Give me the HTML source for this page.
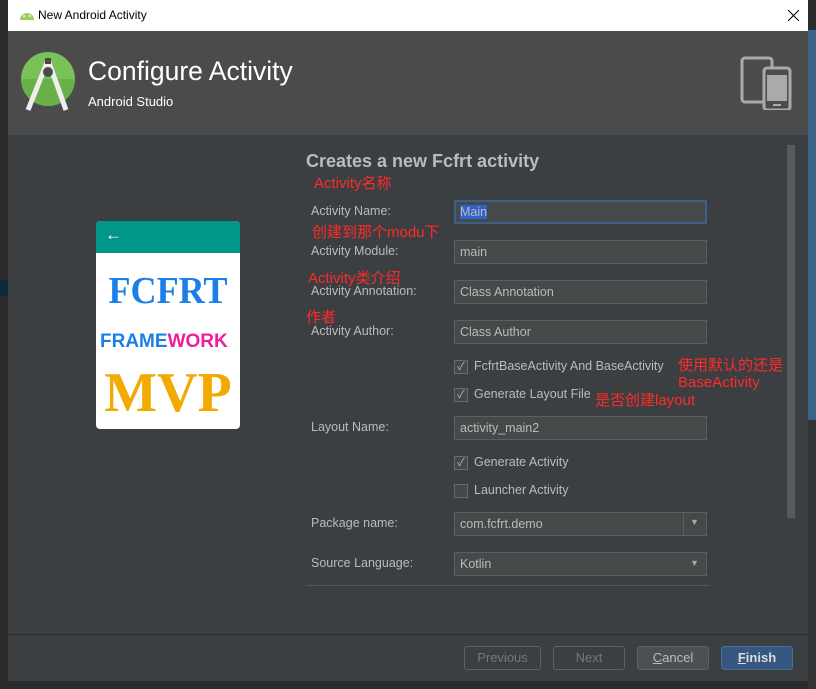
<!DOCTYPE html>
<html><head><meta charset="utf-8"><style>
*{margin:0;padding:0;box-sizing:border-box}
body{width:816px;height:689px;background:#2b2b2b;position:relative;overflow:hidden;font-family:"Liberation Sans","Noto Sans CJK SC",sans-serif;font-size:13px;color:#bbbbbb}
.a{position:absolute}
.red{color:#ff2a2a;font-size:15px;font-family:"Liberation Sans","Noto Sans CJK SC",sans-serif;position:absolute}
.lbl{position:absolute;left:311px;font-size:12.5px;color:#bbbbbb}
.inp{position:absolute;left:454px;width:253px;height:24px;border:1px solid #5e6060;background:#45494a;color:#bbbbbb;font-size:12.5px;padding:4px 0 0 5px}
.cb{position:absolute;left:454px;width:14px;height:14px;border:1px solid #6b6b6b;background:#43494a;color:#a9b7c6;font-size:11px;line-height:12px;text-align:center}
.ct{position:absolute;left:474px;font-size:12.5px;color:#bbbbbb}
.btn{position:absolute;top:646px;height:24px;border:1px solid #5e6060;border-radius:3px;font-size:13px;text-align:center;line-height:22px}
</style></head><body>
<div class="a" style="left:0;top:0;width:8px;height:689px;background:#2b2b2b"></div>
<div class="a" style="left:0;top:280px;width:8px;height:16px;background:#0d293e"></div>
<div class="a" style="left:808px;top:30px;width:8px;height:390px;background:#3b6486"></div>
<div class="a" style="left:808px;top:420px;width:8px;height:269px;background:#313335"></div>
<div class="a" style="left:8px;top:0;width:800px;height:681px;background:#3c3f41"></div>
<div class="a" style="left:8px;top:0;width:800px;height:31px;background:#fff;color:#000;font-size:12px">
 <svg class="a" style="left:11px;top:10px" width="16" height="10" viewBox="0 0 16 10"><path d="M1 10 A7 7 0 0 1 15 10Z" fill="#9acd5a"/><circle cx="5" cy="6" r="1" fill="#fff"/><circle cx="11" cy="6" r="1" fill="#fff"/></svg>
 <span class="a" style="left:30px;top:8px">New Android Activity</span>
 <svg class="a" style="left:780px;top:10px" width="11" height="11"><path d="M0 0L11 11M11 0L0 11" stroke="#000" stroke-width="1"/></svg>
</div>
<div class="a" style="left:8px;top:31px;width:800px;height:104px;background:#4b4b4b"></div>
<svg class="a" style="left:20px;top:52px" width="58" height="62" viewBox="0 0 58 62"><circle cx="28" cy="27" r="27" fill="#78c257"/><path d="M1 27 A27 27 0 0 0 55 27Z" fill="#6ab04a"/><path d="M28 8 L8 58 M28 8 L46 58" stroke="#eee" stroke-width="5"/><circle cx="28" cy="20" r="5" fill="#4a4a4a"/><rect x="25" y="6" width="6" height="6" fill="#4a4a4a"/></svg>
<div class="a" style="left:88px;top:56px;font-size:26.5px;color:#fff">Configure Activity</div>
<div class="a" style="left:88px;top:94px;font-size:13px;color:#fff">Android Studio</div>
<svg class="a" style="left:740px;top:56px" width="52" height="54" viewBox="0 0 52 54"><rect x="2" y="2" width="30" height="44" rx="3" fill="none" stroke="#aaa" stroke-width="3"/><rect x="24" y="12" width="26" height="42" rx="3" fill="#4b4b4b" stroke="#aaa" stroke-width="3"/><rect x="27" y="19" width="20" height="26" fill="#aaa"/><rect x="33" y="48" width="8" height="2" fill="#aaa"/></svg>
<div class="a" style="left:96px;top:221px;width:144px;height:208px;background:#fff;border-radius:4px;overflow:hidden">
 <div style="height:32px;background:#009688;color:#fff;font-size:17px;padding:4px 0 0 9px">←</div>
 <div class="a" style="left:0;top:48px;width:144px;text-align:center;font:900 38px 'Liberation Serif',serif;color:#1c7fe8;transform:scaleX(0.95)">FCFRT</div>
 <div class="a" style="left:4px;top:110px;width:140px;font:bold 19px 'Liberation Sans',sans-serif;color:#1c7fe8">FRAME<span style="color:#ef1c9b">WORK</span></div>
 <div class="a" style="left:0;top:142px;width:144px;text-align:center;font:bold 56px 'Liberation Serif',serif;color:#f2a900;line-height:60px">MVP</div>
</div>
<div class="a" style="left:306px;top:151px;font-size:18px;font-weight:bold;color:#bbbbbb">Creates a new Fcfrt activity</div>
<div class="red" style="left:314px;top:172px">Activity名称</div>
<div class="lbl" style="top:204px">Activity Name:</div>
<div class="inp" style="top:200px;border:2px solid #3d6185;padding:3px 0 0 4px"><span style="background:#2f65ca;color:#bbb">Main</span></div>
<div class="red" style="left:312px;top:221px">创建到那个modu下</div>
<div class="lbl" style="top:244px">Activity Module:</div>
<div class="inp" style="top:240px">main</div>
<div class="red" style="left:308px;top:267px">Activity类介绍</div>
<div class="lbl" style="top:284px">Activity Annotation:</div>
<div class="inp" style="top:280px">Class Annotation</div>
<div class="red" style="left:306px;top:306px">作者</div>
<div class="lbl" style="top:324px">Activity Author:</div>
<div class="inp" style="top:320px">Class Author</div>
<div class="cb" style="top:360px">✓</div><div class="ct" style="top:359px">FcfrtBaseActivity And BaseActivity</div>
<div class="red" style="left:678px;top:354px">使用默认的还是</div>
<div class="red" style="left:678px;top:374px">BaseActivity</div>
<div class="cb" style="top:388px">✓</div><div class="ct" style="top:387px">Generate Layout File</div>
<div class="red" style="left:595px;top:389px">是否创建layout</div>
<div class="lbl" style="top:420px">Layout Name:</div>
<div class="inp" style="top:416px">activity_main2</div>
<div class="cb" style="top:456px">✓</div><div class="ct" style="top:455px">Generate Activity</div>
<div class="cb" style="top:484px"></div><div class="ct" style="top:483px">Launcher Activity</div>
<div class="lbl" style="top:516px">Package name:</div>
<div class="inp" style="top:512px">com.fcfrt.demo<div class="a" style="left:228px;top:0;width:1px;height:22px;background:#5e6060"></div><span class="a" style="left:235px;top:4px;font-size:9px;color:#aaa">▼</span></div>
<div class="lbl" style="top:556px">Source Language:</div>
<div class="inp" style="top:552px">Kotlin<span class="a" style="left:235px;top:5px;font-size:9px;color:#aaa">▼</span></div>
<div class="a" style="left:306px;top:585px;width:404px;height:1px;background:#555"></div>
<div class="a" style="left:787px;top:145px;width:8px;height:373px;background:#575a5c"></div>
<div class="a" style="left:8px;top:634px;width:800px;height:1px;background:#2b2b2b"></div>
<div class="btn" style="left:464px;width:77px;color:#777">Previous</div>
<div class="btn" style="left:553px;width:72px;color:#777">Next</div>
<div class="btn" style="left:637px;width:72px;background:#4c5052;color:#bbb"><u>C</u>ancel</div>
<div class="btn" style="left:721px;width:72px;background:#365880;border-color:#4a6d95;color:#ddd;font-weight:bold"><u>F</u>inish</div>
</body></html>
